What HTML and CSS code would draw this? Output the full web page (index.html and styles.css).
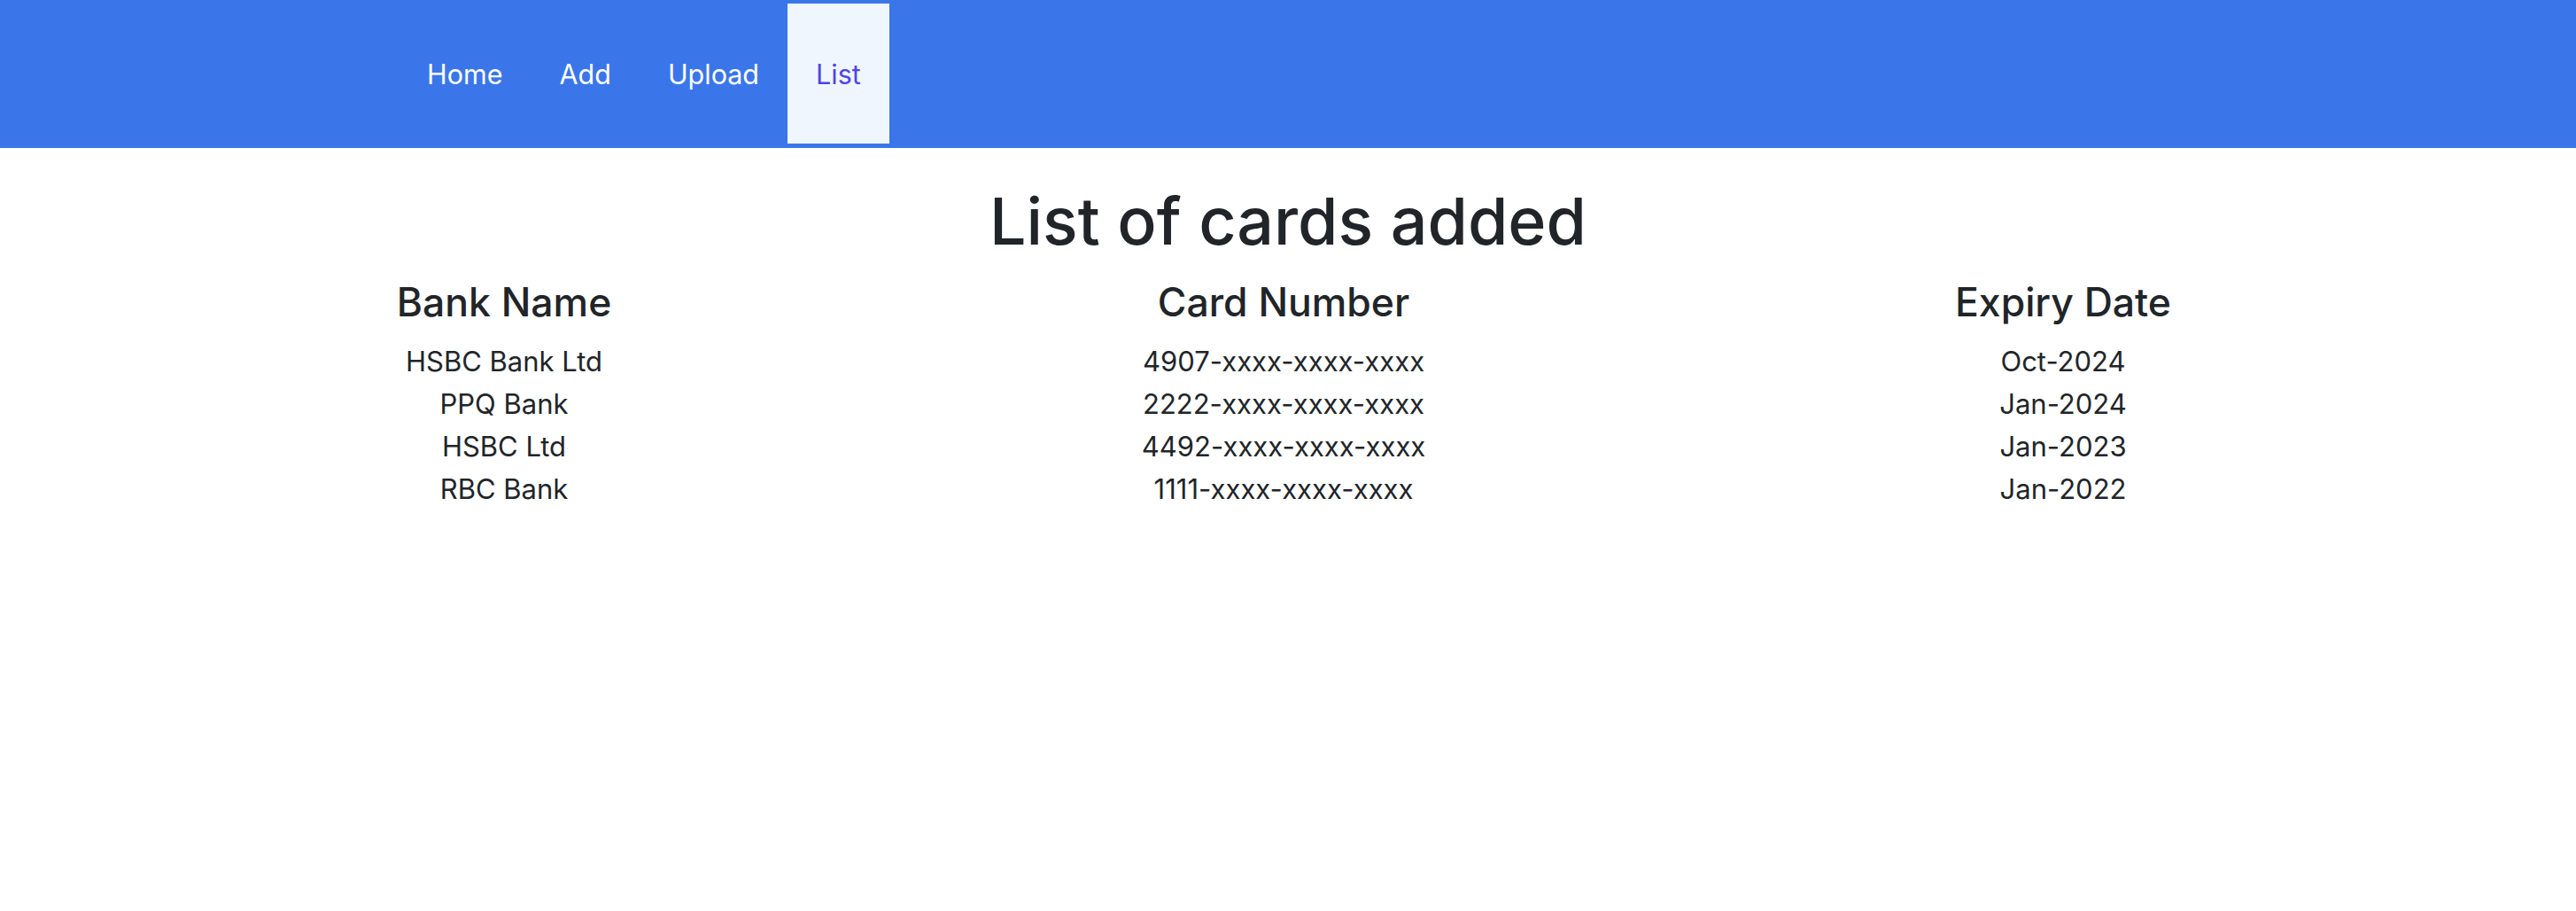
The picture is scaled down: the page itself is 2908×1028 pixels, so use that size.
FILE: index.html
```html
<!DOCTYPE html>
<html lang="en">
<head>
<meta charset="utf-8">
<title>List of cards</title>
<link rel="stylesheet" href="styles.css">
</head>
<body>
<nav class="navbar">
  <a class="nav-link" href="#">Home</a>
  <a class="nav-link" href="#">Add</a>
  <a class="nav-link" href="#">Upload</a>
  <a class="nav-link active" href="#">List</a>
</nav>
<main class="content">
  <h1 class="title">List of cards added</h1>
  <div class="cards">
    <div class="col">
      <h5 class="col-head">Bank Name</h5>
      <div class="cell">HSBC Bank Ltd</div>
      <div class="cell">PPQ Bank</div>
      <div class="cell">HSBC Ltd</div>
      <div class="cell">RBC Bank</div>
    </div>
    <div class="col">
      <h5 class="col-head">Card Number</h5>
      <div class="cell">4907-xxxx-xxxx-xxxx</div>
      <div class="cell">2222-xxxx-xxxx-xxxx</div>
      <div class="cell">4492-xxxx-xxxx-xxxx</div>
      <div class="cell">1111-xxxx-xxxx-xxxx</div>
    </div>
    <div class="col">
      <h5 class="col-head">Expiry Date</h5>
      <div class="cell">Oct-2024</div>
      <div class="cell">Jan-2024</div>
      <div class="cell">Jan-2023</div>
      <div class="cell">Jan-2022</div>
    </div>
  </div>
</main>
</body>
</html>
```

FILE: styles.css
```css
html, body {
  margin: 0;
  padding: 0;
  background: #ffffff;
}
body {
  font-family: Inter, "Noto Sans", "Liberation Sans", sans-serif;
  color: #212529;
}
.navbar {
  display: flex;
  align-items: stretch;
  height: 167px;
  padding-left: 450px;
  background: #3a76e9;
  box-sizing: border-box;
}
.nav-link {
  display: flex;
  align-items: center;
  padding: 0 32px;
  font-size: 30.5px;
  color: #ffffff;
  text-decoration: none;
}
.nav-link.active {
  margin: 4px 0 5px;
  background: #eff6fe;
  color: #4f46e5;
}
.content {
  padding-top: 39px;
}
.title {
  margin: 0;
  text-align: center;
  font-size: 73.5px;
  font-weight: 500;
  line-height: 88px;
}
.cards {
  display: grid;
  grid-template-columns: repeat(3, 880px);
  margin-left: 129px;
  margin-top: 21px;
}
.col {
  display: flex;
  flex-direction: column;
  align-items: center;
}
.col-head {
  margin: 0 0 17px;
  font-size: 44.5px;
  font-weight: 500;
  line-height: 52px;
}
.cell {
  font-size: 31px;
  line-height: 48px;
}
```
